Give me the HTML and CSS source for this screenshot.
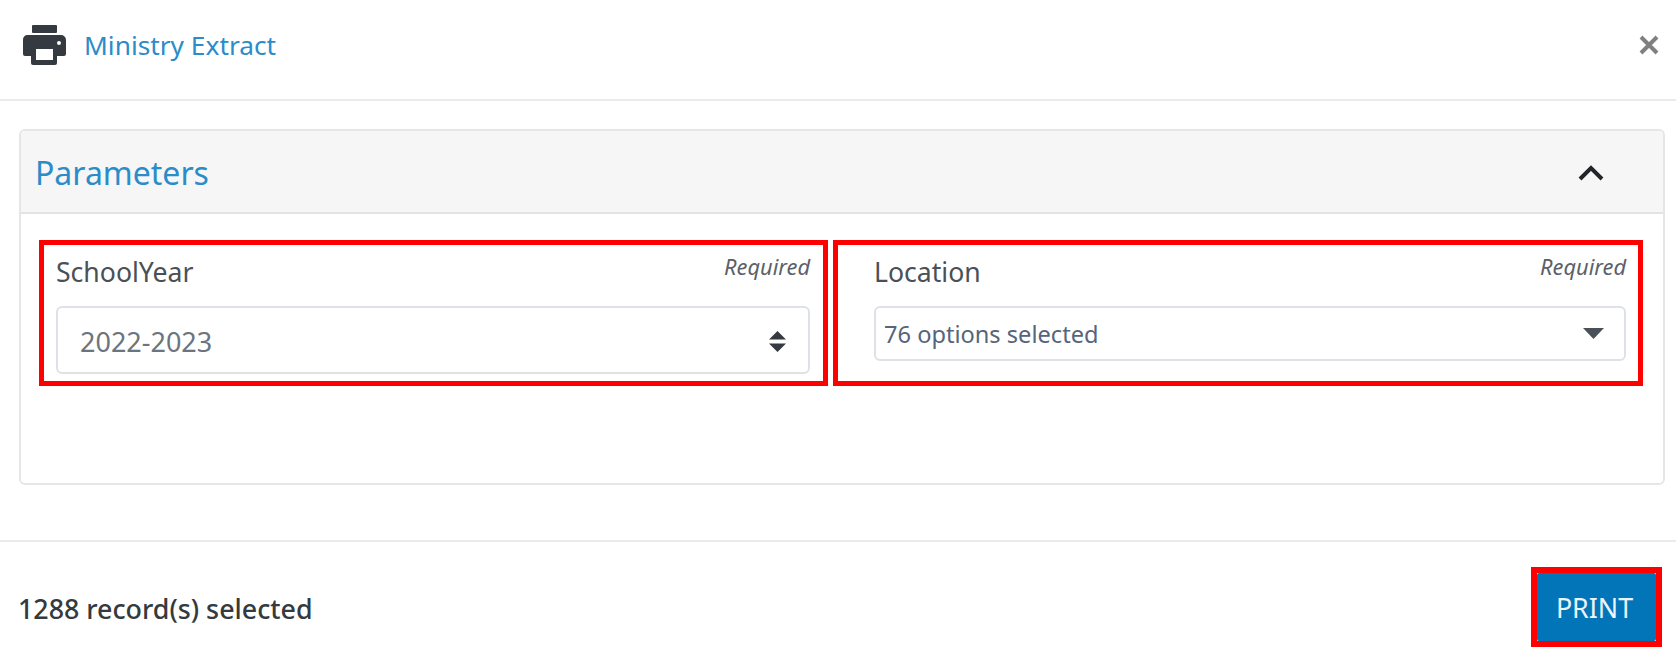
FILE: index.html
```html
<!DOCTYPE html>
<html lang="en">
<head>
<meta charset="utf-8">
<title>Ministry Extract</title>
<link rel="stylesheet" href="styles.css">
</head>
<body>
<div class="modal">
  <header class="modal-header">
    <svg class="print-icon" viewBox="0 0 44 40" aria-hidden="true">
      <rect x="10" y="0" width="25" height="8" rx="1" fill="#343a40"/>
      <path fill="#343a40" fill-rule="evenodd" d="M5 10h34a5 5 0 0 1 5 5v14a2 2 0 0 1-2 2h-7v7a2 2 0 0 1-2 2H11a2 2 0 0 1-2-2v-7H3a2 2 0 0 1-2-2V15a5 5 0 0 1 4-5zM14 24v11h17V24zM37 16a2 2 0 1 0 0 4a2 2 0 1 0 0-4z"/>
    </svg>
    <h1 class="modal-title">Ministry Extract</h1>
    <svg class="close-icon" viewBox="0 0 20 20" aria-hidden="true">
      <path d="M2 2L18 18M18 2L2 18" stroke="#808080" stroke-width="4" fill="none"/>
    </svg>
  </header>
  <main class="modal-body">
    <section class="card">
      <div class="card-header">
        <h2 class="card-title">Parameters</h2>
        <svg class="chevron" viewBox="0 0 26 16" aria-hidden="true">
          <path d="M2 14L13 3L24 14" stroke="#212529" stroke-width="4" fill="none"/>
        </svg>
      </div>
      <div class="card-body">
        <div class="field field-year">
          <div class="field-top">
            <label class="field-label">SchoolYear</label>
            <span class="required">Required</span>
          </div>
          <div class="select select-year">
            <span>2022-2023</span>
            <svg class="sort-icon" viewBox="0 0 17 21" aria-hidden="true">
              <path fill="#343a40" d="M8.5 0L17 8.5H0zM0 12.5H17L8.5 21z"/>
            </svg>
          </div>
        </div>
        <div class="field field-location">
          <div class="field-top">
            <label class="field-label">Location</label>
            <span class="required">Required</span>
          </div>
          <div class="select select-location">
            <span>76 options selected</span>
            <svg class="caret-icon" viewBox="0 0 21 11" aria-hidden="true">
              <path fill="#495057" d="M0 0H21L10.5 11z"/>
            </svg>
          </div>
        </div>
      </div>
    </section>
  </main>
  <footer class="modal-footer">
    <span class="record-count">1288 record(s) selected</span>
    <div class="print-frame"><button class="print-button" type="button">PRINT</button></div>
  </footer>
</div>
</body>
</html>
```
FILE: styles.css
```css
* { box-sizing: border-box; }
html, body { margin: 0; padding: 0; background: #fff; }
body { font-family: "Noto Sans", "Open Sans", sans-serif; color: #495057; }
.modal { width: 1676px; height: 658px; display: flex; flex-direction: column; }

.modal-header {
  height: 101px; flex: none; display: flex; align-items: center;
  padding: 0 17px 9px 22px; border-bottom: 2px solid #e9ecef;
}
.print-icon { width: 44px; height: 40px; flex: none; }
.modal-title { margin: 0 0 0 18px; font-size: 26.3px; font-weight: 400; color: #2b8cc9; flex: 1; }
.close-icon { width: 20px; height: 20px; flex: none; }

.modal-body { flex: none; height: 439px; padding: 28px 11px 0 19px; }
.card { height: 356px; border: 2px solid #e6e6e6; border-radius: 6px; overflow: hidden; }
.card-header {
  height: 83px; background: #f6f6f6; border-bottom: 2px solid #e3e3e3;
  display: flex; align-items: center; justify-content: space-between;
  padding: 2px 59px 0 14px;
}
.card-title { margin: 0; font-size: 32px; font-weight: 400; color: #2b8cc9; }
.chevron { width: 26px; height: 16px; flex: none; }
.card-body { display: flex; gap: 5px; padding: 26px 0 0 18px; }

.field { height: 146px; border: 5px solid #f00; }
.field-year { width: 789px; padding: 5px 13px 0 12px; }
.field-location { width: 810px; padding: 5px 12px 0 36px; }
.field-top { display: flex; justify-content: space-between; align-items: flex-start; height: 56px; }
.field-label { font-size: 26.6px; line-height: 44px; color: #495057; }
.required { font-size: 21.8px; font-style: italic; line-height: 34px; color: #5a6168; }

.select {
  display: flex; align-items: center; justify-content: space-between;
  background: #fff; border: 2px solid #dee2e6; border-radius: 6px;
}
.select-year { height: 68px; padding: 2px 22px 0 22px; font-size: 27px; color: #6c757d; }
.select-location { height: 55px; padding: 0 20px 0 8px; font-size: 23.6px; color: #55657b; }
.sort-icon { width: 17px; height: 21px; flex: none; }
.caret-icon { width: 21px; height: 11px; flex: none; }

.modal-footer {
  flex: 1; display: flex; align-items: center; justify-content: space-between;
  border-top: 2px solid #e9ecef; padding: 14px 14px 0 18px;
}
.record-count { font-size: 26.8px; font-weight: 500; color: #343a40; margin-top: 3px; }
.print-frame { border: 6px solid #f00; width: 131px; height: 80px; }
.print-button {
  display: block; width: 100%; height: 100%; border: 0; border-radius: 2px;
  background: #0275b8; color: #eaf4fa; font-family: inherit; font-size: 26.8px; padding: 0 4px 0 0;
}
```
